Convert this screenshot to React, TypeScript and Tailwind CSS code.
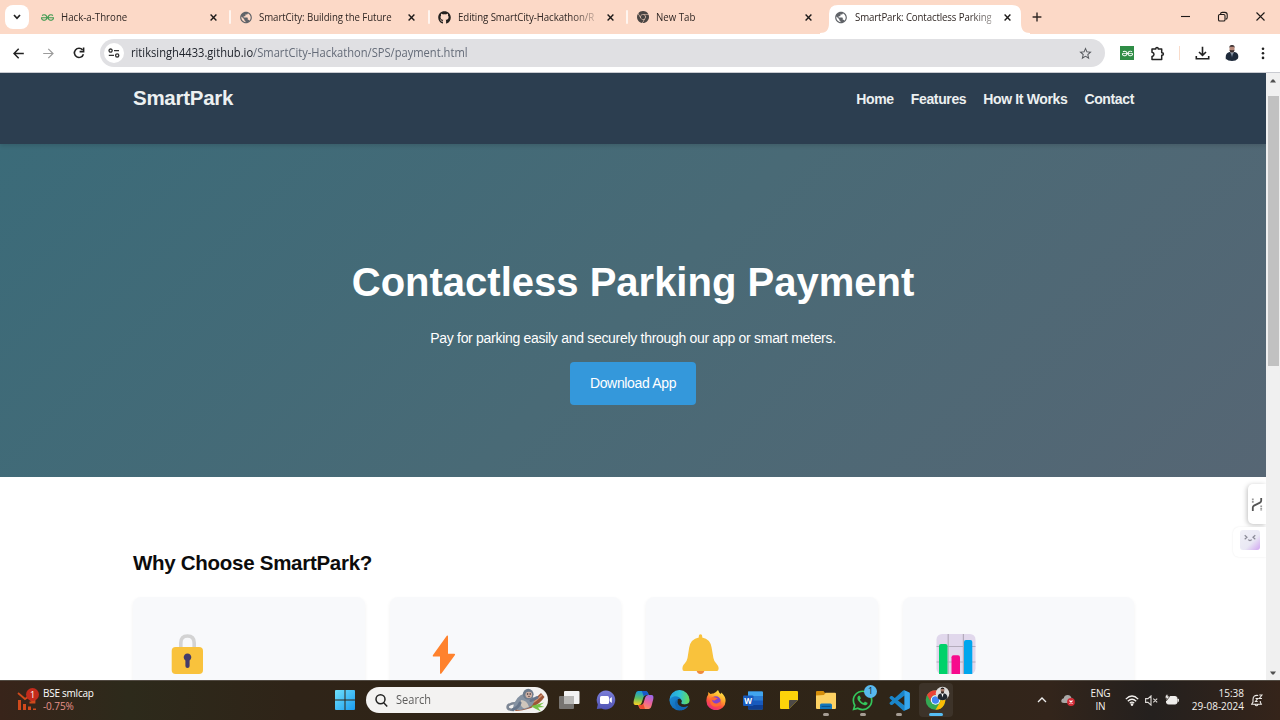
import type { ReactNode } from "react";
import { SiGeeksforgeeks, SiGooglechrome } from "react-icons/si";
import { FaGithub, FaWhatsapp } from "react-icons/fa";
import { MdPublic, MdStarBorder } from "react-icons/md";

const ui = "font-['Open_Sans','Noto_Sans',sans-serif]";

type TabProps = { icon: ReactNode; title: string; active?: boolean; sep?: boolean; titleClass?: string };

function Tab({ icon, title, active, sep, titleClass = "" }: TabProps) {
  return (
    <div className="relative h-[33px] w-[198.5px] shrink-0 pt-[5px]">
      {active && (
        <svg className="absolute -left-[6px] top-[5px]" width="210" height="29" viewBox="0 0 210 29">
          <path d="M0 29 V28 C6 28 9 25 9 18 V9 Q9 0 18 0 H192 Q201 0 201 9 V18 C201 25 204 28 210 28 V29Z" fill="#fff" />
        </svg>
      )}
      <div className="relative flex h-6 items-center pl-[8.5px]">
        <span className="flex w-[14px] justify-center">{icon}</span>
        <span className="ml-[6.5px] w-[136px] whitespace-nowrap text-[11px] text-[#302724]">
          <span className={`inline-block origin-left scale-x-[0.88] ${titleClass}`}>{title}</span>
        </span>
        <svg className="ml-[13px]" width="7" height="7" viewBox="0 0 7 7">
          <path d="M0.6 0.6 L6.4 6.4 M6.4 0.6 L0.6 6.4" stroke="#1d1a19" strokeWidth="1.4" />
        </svg>
      </div>
      {sep && <span className="absolute -right-px top-[10px] h-[14px] w-[2px] rounded bg-[#fff5ef]" />}
    </div>
  );
}

function TabStrip() {
  const globe = <MdPublic size={15} color="#606368" />;
  return (
    <div className={`flex h-[34px] bg-[#fcd9c7] ${ui}`}>
      <div className="ml-[5px] mt-[5px] flex h-6 w-6 items-center justify-center rounded-lg bg-white">
        <svg width="8" height="6" viewBox="0 0 8 6">
          <path d="M1 1 L4 4.3 L7 1" fill="none" stroke="#222" strokeWidth="1.7" />
        </svg>
      </div>
      <div className="ml-[2.5px] flex">
        <Tab icon={<SiGeeksforgeeks size={13} color="#3f9a50" />} title="Hack-a-Throne" sep />
        <Tab icon={globe} title="SmartCity: Building the Future" titleClass="tracking-[-0.1px]" sep />
        <Tab
          icon={<FaGithub size={13} color="#24211f" />}
          title="Editing SmartCity-Hackathon/R"
          titleClass="tracking-[-0.1px] [mask-image:linear-gradient(90deg,#000_83%,rgba(0,0,0,0.25)_100%)]"
          sep
        />
        <Tab icon={<SiGooglechrome size={12} color="#4a4543" />} title="New Tab" />
        <Tab
          icon={globe}
          title="SmartPark: Contactless Parking"
          titleClass="tracking-[-0.15px] [mask-image:linear-gradient(90deg,#000_83%,rgba(0,0,0,0.5)_100%)]"
          active
        />
      </div>
      <svg className="ml-[8px] mt-[12px]" width="10" height="10" viewBox="0 0 10 10">
        <path d="M5 0.6 V9.4 M0.6 5 H9.4" stroke="#302724" strokeWidth="1.4" />
      </svg>
      <div className="ml-auto mt-[11px] flex h-3 items-center pr-[14px]">
        <svg width="86" height="12" viewBox="0 0 86 12" fill="none" stroke="#1e1a18" strokeWidth="1.1">
          <path d="M1 5.5 H10" />
          <rect x="38.5" y="3.5" width="6.5" height="6.5" rx="1.3" />
          <path d="M40.5 3 Q40.6 1.4 42.4 1.4 H44.8 Q47.2 1.4 47.2 3.8 V6.4 Q47.2 8 45.6 8.2" />
          <path d="M76.5 1.5 L84.5 9.5 M84.5 1.5 L76.5 9.5" />
        </svg>
      </div>
    </div>
  );
}

function Toolbar() {
  return (
    <div className={`flex h-[39px] items-center border-b border-[#c9cbd1] bg-white pl-[13px] ${ui}`}>
      <svg width="11" height="11" viewBox="0 0 11 11" fill="none" stroke="#222" strokeWidth="1.5">
        <path d="M10.8 5.5 H1.5 M5.7 0.8 L1 5.5 L5.7 10.2" />
      </svg>
      <svg className="ml-[19px]" width="11" height="11" viewBox="0 0 11 11" fill="none" stroke="#9b9b9b" strokeWidth="1.2">
        <path d="M0.2 5.5 H9.5 M5.3 0.8 L10 5.5 L5.3 10.2" />
      </svg>
      <svg className="ml-[19px]" width="12" height="12" viewBox="0 0 12 12" fill="none" stroke="#222" strokeWidth="1.6">
        <path d="M9.6 3 A4.6 4.6 0 1 0 10.4 7.2" />
        <path d="M10.6 0.6 V4.6 H6.6" />
      </svg>
      <div className="ml-[15px] flex h-7 w-[1005px] items-center rounded-full bg-[#e0e0e3] pl-[4px] pr-[12px]">
        <span className="flex h-5 w-5 items-center justify-center rounded-full bg-white">
          <svg width="12" height="10" viewBox="0 0 12 10" fill="none" stroke="#333" strokeWidth="1.3">
            <circle cx="2.6" cy="2.6" r="1.6" />
            <path d="M6 2.6 H11 M0.8 7.4 H6" />
            <circle cx="9.2" cy="7.4" r="1.6" />
          </svg>
        </span>
        <span className="ml-[7px] inline-block origin-left scale-x-[0.9] whitespace-nowrap text-[12.4px] text-[#646b78]">
          <span className="text-[#20242c]">ritiksingh4433.github.io</span>/SmartCity-Hackathon/SPS/payment.html
        </span>
        <MdStarBorder className="ml-auto" size={15} color="#55585d" />
      </div>
      <div className="ml-[15px] flex h-[14px] w-[14px] items-center justify-center bg-[#2f8d46]">
        <SiGeeksforgeeks size={11} color="#fff" />
      </div>
      <svg className="ml-[16px]" width="15" height="15" viewBox="0 0 15 15">
        <path
          d="M2 3 H5.8 V2.6 A1.2 1.2 0 0 1 8.2 2.6 V3 H11.7 V6.8 H12.2 A1.2 1.2 0 0 1 12.2 9.2 H11.7 V13.6 H2 V10.5 Q4 10 4 8.3 Q4 6.6 2 6.2Z"
          fill="none"
          stroke="#222"
          strokeWidth="1.5"
          strokeLinejoin="round"
        />
      </svg>
      <span className="ml-[14px] h-[14px] w-px bg-[#f9dccb]" />
      <svg className="ml-[15px]" width="15" height="15" viewBox="0 0 15 15" fill="none" stroke="#222" strokeWidth="1.6">
        <path d="M7.5 0.8 V9 M4 6 L7.5 9.4 L11 6 M1.3 10 V12.8 H13.7 V10" />
      </svg>
      <svg className="ml-[15px]" width="14" height="18" viewBox="0 0 14 18">
        <path d="M1 16 Q-0.4 9.2 4.5 8 H9.5 Q14.4 9.2 13 14.5 Q11 17 7 17 Q3 17 1 15Z" fill="#1e2a3b" />
        <path d="M5.3 8 H8.7 L7 13Z" fill="#c8d3df" />
        <path d="M6.6 9 H7.4 L7.6 13 L7 14 L6.4 13Z" fill="#2c3a50" />
        <ellipse cx="7" cy="4.9" rx="2.5" ry="3.3" fill="#b8897a" />
        <path d="M4.4 4.2 Q4 1 7 1 Q10 1 9.6 4.2 L9 2.8 H5Z M4.6 5.8 L5.5 6.2 H8.5 L9.4 5.8 Q9.3 8.6 7 8.6 Q4.7 8.6 4.6 5.8Z" fill="#342b2d" />
      </svg>
      <svg className="ml-[21.5px]" width="4" height="13" viewBox="0 0 4 13" fill="#222">
        <circle cx="2" cy="1.7" r="1.3" />
        <circle cx="2" cy="6.3" r="1.3" />
        <circle cx="2" cy="10.9" r="1.3" />
      </svg>
    </div>
  );
}

const LockIcon = () => (
  <svg width="40" height="40" viewBox="0 0 40 40">
    <path d="M13.8 16 V9 Q13.8 2 20.5 2 Q27.2 2 27.2 9 V16" fill="none" stroke="#d3d3d3" strokeWidth="3.6" />
    <rect x="4.7" y="13" width="31.3" height="27" rx="4" fill="#f9c23c" />
    <path d="M18.4 26.5 A3.8 3.8 0 1 1 22.6 26.5 V32 A2.1 2.1 0 0 1 18.4 32Z" fill="#433b6b" />
  </svg>
);

const BoltIcon = () => (
  <svg width="40" height="40" viewBox="0 0 40 40">
    <path d="M23.8 1.7 Q25 1 25 2.4 V19.8 H31.2 Q32.6 19.9 31.8 21.2 L18.4 39.4 Q17 40.5 17 39 V22.6 H10.8 Q9.2 22.5 10 21.1Z" fill="#ff822d" />
  </svg>
);

const BellIcon = () => (
  <svg width="40" height="40" viewBox="0 0 40 40">
    <path d="M16.5 36 H24.5 Q24 40 20.5 40 Q17 40 16.5 36Z" fill="#f18b3b" />
    <path d="M18.8 3.4 V2 A1.7 1.7 0 0 1 22.2 2 V3.4 Q30.4 5 31.6 13.5 L33.4 24 Q33.8 27 36.5 29.7 Q39.6 33 38.2 36.3 Q38 37 36.7 37 H4.3 Q3 37 2.7 36.3 Q1.6 32.5 4.7 29.5 Q7 27 7.5 24 L9.2 13.5 Q10.5 5 18.8 3.4Z" fill="#f9c23c" />
  </svg>
);

const ChartIcon = () => (
  <svg width="40" height="40" viewBox="0 0 40 40">
    <rect x="0.5" width="39" height="40" rx="5.5" fill="#e1d8ec" />
    <path d="M12.2 0 V40 M27.4 0 V40 M0.5 12.5 H39.5 M0.5 28 H39.5" stroke="#b4acbc" strokeWidth="1.2" />
    <path d="M3 40 V12 Q3 10 5 10 H9.5 Q11.5 10 11.5 12 V40Z" fill="#00d26a" />
    <path d="M15.5 40 V23.3 Q15.5 21.3 17.5 21.3 H22 Q24 21.3 24 23.3 V40Z" fill="#f70a8d" />
    <path d="M28 40 V8 Q28 6 30 6 H34.3 Q36.3 6 36.3 8 V40Z" fill="#00a6ed" />
  </svg>
);

function Page() {
  return (
    <div className="min-w-0 flex-1 overflow-hidden bg-white font-['Liberation_Sans',Arial,sans-serif]">
      <header className="relative z-10 h-[71px] bg-[#2c3e50] shadow-[0_2px_4px_rgba(0,0,0,0.12)]">
        <div className="ml-[133px] flex w-[1001px] items-start justify-between text-[#ecf0f1]">
          <div className="mt-[10px] text-[20.5px] leading-[30px] font-bold tracking-[-0.27px]">SmartPark</div>
          <nav className="mt-[16px] flex gap-[17px] text-[14px] leading-[20px] font-bold tracking-[-0.36px]">
            <span>Home</span>
            <span>Features</span>
            <span>How It Works</span>
            <span>Contact</span>
          </nav>
        </div>
      </header>
      <section className="flex h-[333px] flex-col items-center bg-[linear-gradient(135deg,#3b6b79_0%,#496a76_50%,#566674_100%)] text-white">
        <h1 className="mt-[108px] text-[40px] leading-[60px] font-bold">Contactless Parking Payment</h1>
        <p className="mt-[16px] text-[14px] leading-[20px] tracking-[-0.295px]">
          Pay for parking easily and securely through our app or smart meters.
        </p>
        <div className="mt-[14px] flex h-[43px] w-[126px] items-center justify-center rounded-[4px] bg-[#3498db] text-[14px] tracking-[-0.34px]">
          Download App
        </div>
      </section>
      <main className="ml-[133px] w-[1001px] pt-[71px]">
        <h2 className="text-[20.5px] leading-[30px] font-bold tracking-[-0.28px] text-[#0c0c0c]">Why Choose SmartPark?</h2>
        <div className="mt-[19px] grid grid-cols-4 gap-[25px]">
          {[<LockIcon />, <BoltIcon />, <BellIcon />, <ChartIcon />].map((icon, i) => (
            <div key={i} className="h-[200px] rounded-[8px] bg-[#f8f9fb] pl-[33.8px] pt-[37px] shadow-[0_2px_4px_rgba(0,0,0,0.06)]">
              {icon}
            </div>
          ))}
        </div>
      </main>
    </div>
  );
}

function ScrollBar() {
  return (
    <div className="flex w-[14px] flex-col items-center bg-[#f0f0f0]">
      <svg className="mt-[6px]" width="6" height="4" viewBox="0 0 6 4">
        <path d="M0 3.5 L2.2 0.6 H3.8 L6 3.5Z" fill="#505050" />
      </svg>
      <div className="mt-[13px] h-[270px] w-[11px] bg-[#c1c1c1]" />
      <svg className="mb-[5px] mt-auto" width="6" height="4" viewBox="0 0 6 4">
        <path d="M0 0.5 L2.2 3.4 H3.8 L6 0.5Z" fill="#505050" />
      </svg>
    </div>
  );
}

function SideWidgets() {
  return (
    <div className="absolute right-[14px] top-[411px] z-20 flex flex-col items-end">
      <div className="flex h-10 w-[18px] items-center justify-center rounded-l-[5px] bg-white shadow-[-1px_1px_5px_rgba(0,0,0,0.25)] [clip-path:inset(-8px_0_-8px_-8px)]">
        <svg width="12" height="15" viewBox="0 0 12 15" fill="none">
          <path d="M1.8 14 V10.5 Q1.8 9.3 3 8.6 L9 5.6 Q10.2 5 10.2 3.8 V1" stroke="#555" strokeWidth="1.8" />
          <path d="M1.8 1.5 V6.5 M10.2 8.5 V14" stroke="#999" strokeWidth="1.8" strokeDasharray="1.8 0.7" />
        </svg>
      </div>
      <div className="mt-[3px] flex h-[30px] w-[33px] items-start rounded-l-[6px] bg-white pl-[7px] pt-[3px] shadow-[0_0_2px_rgba(0,0,0,0.09)] [clip-path:inset(-4px_0_-4px_-4px)]">
        <div className="flex h-5 w-5 justify-center rounded-[3px] bg-[linear-gradient(135deg,#f0f0f7_0%,#e9e8f4_60%,#d0a5f0_100%)] pt-[4px]">
          <svg width="12" height="8" viewBox="0 0 12 8" fill="none" stroke="#8b8b97" strokeWidth="1.2">
            <path d="M0.7 1.2 L3 3.2 L0.7 5.2 M11.3 1.2 L9 3.2 L11.3 5.2 M4.2 5.6 Q6 7.4 7.8 5.6" />
          </svg>
        </div>
      </div>
    </div>
  );
}

const WindowsLogo = () => (
  <svg width="20" height="20" viewBox="0 0 20 20">
    <defs>
      <linearGradient id="win" x1="0" y1="0" x2="20" y2="20" gradientUnits="userSpaceOnUse">
        <stop offset="0" stopColor="#6fe0fb" />
        <stop offset="1" stopColor="#1b9cf0" />
      </linearGradient>
    </defs>
    <path d="M0 1 Q0 0 1 0 H9.5 V9.5 H0Z M10.5 0 H19 Q20 0 20 1 V9.5 H10.5Z M0 10.5 H9.5 V20 H1 Q0 20 0 19Z M10.5 10.5 H20 V19 Q20 20 19 20 H10.5Z" fill="url(#win)" />
  </svg>
);

const Monkey = () => (
  <svg width="40" height="24" viewBox="0 0 40 24">
    <path d="M10 21 Q23 18 35 5 L38.5 9 Q34 16 25 20 Q16 23 9 23Z" fill="#9c5638" />
    <path d="M11 21.5 Q24 19 36 7" stroke="#cf9274" strokeWidth="1.6" fill="none" />
    <path d="M25 18 L31 16.5 L38 14.5 L34 17.5 L38.5 19 L32 19.5 L35 23.5 L28 20Z" fill="#76c247" />
    <path d="M8 22 Q0 22 2 17.5 Q5 15 11 15" stroke="#7d8795" strokeWidth="2.6" fill="none" />
    <path d="M7 20 Q9 8 19 5.5 Q29 5 28 14 Q26 20 17 21.5 Q10 23 7 20Z" fill="#8592a2" />
    <path d="M15 12 Q21 12 23 19 L18 20.5 Q13 18 15 12Z" fill="#cfc6bc" />
    <path d="M14 15 Q12 20 7 21.5 M25 12.5 L31 9.5" stroke="#66758a" strokeWidth="3" fill="none" strokeLinecap="round" />
    <circle cx="22.2" cy="6.2" r="5.4" fill="#6e7c8d" />
    <ellipse cx="22.8" cy="6.9" rx="3.4" ry="3.1" fill="#cdb0a4" />
    <circle cx="21.6" cy="6" r="0.8" fill="#342f34" />
    <circle cx="24.2" cy="6" r="0.8" fill="#342f34" />
    <path d="M22 8.4 H24" stroke="#634b46" strokeWidth="0.8" />
  </svg>
);

const TaskView = () => (
  <svg width="21" height="20" viewBox="0 0 21 20">
    <rect x="5" y="1" width="15.5" height="13" rx="1" fill="#f3f3f3" />
    <rect x="0" y="6" width="15" height="13" rx="1" fill="#777471" />
    <path d="M5 6 H15 V14 H5Z" fill="#b9b8b6" />
  </svg>
);

const Chat = () => (
  <svg width="20" height="20" viewBox="0 0 20 20">
    <defs>
      <linearGradient id="chat" x1="0" y1="0" x2="0" y2="1">
        <stop offset="0" stopColor="#7b7fd9" />
        <stop offset="1" stopColor="#4f52b2" />
      </linearGradient>
    </defs>
    <path d="M10 0.5 A9.5 9.5 0 1 1 5.5 18.5 L0.8 19 L1.8 14.5 A9.5 9.5 0 0 1 10 0.5Z" fill="url(#chat)" />
    <rect x="4" y="6" width="9" height="8" rx="1.5" fill="#fff" />
    <path d="M13.6 8.8 L15.8 7 V13 L13.6 11.2Z" fill="#fff" />
  </svg>
);

const Copilot = () => (
  <svg width="21" height="20" viewBox="0 0 21 20">
    <defs>
      <linearGradient id="cpa" x1="0.3" y1="0" x2="0.2" y2="1">
        <stop offset="0" stopColor="#1798df" />
        <stop offset="0.5" stopColor="#5bbf64" />
        <stop offset="1" stopColor="#ffd021" />
      </linearGradient>
      <linearGradient id="cpb" x1="0.8" y1="0" x2="0.3" y2="1">
        <stop offset="0" stopColor="#9a67eb" />
        <stop offset="0.5" stopColor="#ee6497" />
        <stop offset="1" stopColor="#ff9750" />
      </linearGradient>
    </defs>
    <path d="M5 1 H12.5 Q14.5 1 15.2 3.5 L15.8 5 H13 Q11 5 10.3 7.5 L8.8 12.4 Q8 15 5.8 15 H2.5 Q0 15 0.7 11 L2.5 4 Q3.3 1 5 1Z" fill="url(#cpa)" />
    <path d="M12.5 1 Q14.5 1 15.2 3.5 L15.8 5 H13 Q11.5 5 10.8 6.5 L8.8 1Z" fill="#1858c8" />
    <path d="M16 19 H8.5 Q6.5 19 5.8 16.5 L5.2 15 H8 Q10 15 10.7 12.5 L12.2 7.6 Q13 5 15.2 5 H18.5 Q21 5 20.3 9 L18.5 16 Q17.7 19 16 19Z" fill="url(#cpb)" />
    <path d="M5.2 15 H8 Q9.5 15 10.2 13.5 L12 19 H8.5 Q6.5 19 5.8 16.5Z" fill="#ed4a32" />
  </svg>
);

const Edge = () => (
  <svg width="21" height="21" viewBox="0 0 21 21">
    <defs>
      <linearGradient id="ea" x1="0" y1="0.4" x2="1" y2="0.5">
        <stop offset="0" stopColor="#259fe0" />
        <stop offset="0.5" stopColor="#2ec2d6" />
        <stop offset="1" stopColor="#66dc55" />
      </linearGradient>
      <linearGradient id="eb" x1="0" y1="0" x2="1" y2="1">
        <stop offset="0" stopColor="#1c93dd" />
        <stop offset="1" stopColor="#0e55a5" />
      </linearGradient>
    </defs>
    <circle cx="10.5" cy="10.5" r="10" fill="url(#eb)" />
    <path d="M0.5 10 A10 10 0 0 1 20.5 10 Q20.5 14.3 15.7 14.4 Q12 14.4 12.2 12.8 Q13.3 11.8 12.4 9.9 Q10.5 6 5.8 6.3 Q2 6.8 0.5 10Z" fill="url(#ea)" />
    <path d="M8.6 9.6 Q6.6 16.7 14.8 17.7 Q17.5 17.6 19.2 15.7 L20.3 15.2 L21 14 L20 13 Q18.5 14.4 15.7 14.4 Q12 14.4 12.2 12.8 Q13.4 11.6 12.4 9.9 Q10.4 8 8.6 9.6Z" fill="#2b2519" />
    <path d="M6 12.5 Q6 19 12.5 20.3 Q17.4 19.4 19.2 15.7 Q14.5 18.2 10.9 16.1 Q7.6 14 8.6 9.6 Q6.4 10 6 12.5Z" fill="#1267b4" />
  </svg>
);

const Firefox = () => (
  <svg width="20" height="20" viewBox="0 0 20 20">
    <defs>
      <linearGradient id="ff" x1="0.8" y1="0" x2="0.3" y2="1">
        <stop offset="0" stopColor="#fff150" />
        <stop offset="0.4" stopColor="#ffa929" />
        <stop offset="0.7" stopColor="#ff4e42" />
        <stop offset="1" stopColor="#e52a82" />
      </linearGradient>
    </defs>
    <path d="M12 0 Q13 3 15 4 L15.3 2.5 Q19.7 6.5 19.6 11 A9.6 9.2 0 0 1 0.4 11 Q0.2 7 2.2 4.5 L2.2 2 L4.5 4 Q5.8 3.4 7.4 3.6 Q9.7 2.8 12 0Z" fill="url(#ff)" />
    <circle cx="9.8" cy="11.2" r="5" fill="#8342ca" />
    <path d="M4.6 8.2 Q6.7 6.2 9.6 7.6 L12 8.8 Q10 9.1 9 10.2 Q7.4 10.8 5.9 9.7 Q7 14 11 13.4 Q14 13 15 10 Q15.4 16.6 9.7 16.7 Q4.2 16.3 4 11Z" fill="#ff6b30" />
  </svg>
);

const Word = () => (
  <svg width="20" height="19" viewBox="0 0 20 19">
    <rect x="5" y="0.5" width="15" height="18" rx="1.2" fill="#2b7cd3" />
    <path d="M5 0.5 H19 Q20 0.5 20 1.5 V5 H5Z" fill="#41a5ee" />
    <path d="M5 9.5 H20 V14 H5Z" fill="#185abd" />
    <path d="M5 14 H20 V17.5 Q20 18.5 19 18.5 H6 Q5 18.5 5 17.5Z" fill="#103f91" />
    <rect x="0" y="4.5" width="10.5" height="10.5" rx="1" fill="#185abd" />
    <text x="5.2" y="12.6" textAnchor="middle" fontSize="8" fontWeight="700" fill="#fff" fontFamily="Open Sans">W</text>
  </svg>
);

const Sticky = () => (
  <svg width="18" height="18" viewBox="0 0 18 18">
    <path d="M1 0 H17 Q18 0 18 1 V9 L9 18 H1 Q0 18 0 17 V1 Q0 0 1 0Z" fill="#fcd30a" />
    <path d="M9 18 V9.7 Q9 9 9.7 9 H18Z" fill="#4e4a47" />
  </svg>
);

const Explorer = () => (
  <svg width="20" height="18" viewBox="0 0 20 18">
    <path d="M0 1 Q0 0 1 0 H7.5 L9 2 V5 H0Z" fill="#d48d0a" />
    <path d="M0 4.5 L8 4 L9.5 1.7 H19 Q20 1.7 20 2.7 V17 Q20 18 19 18 H1 Q0 18 0 17Z" fill="#fcd163" />
    <path d="M4 18 V14 Q4 12.5 5.5 12.5 H14.5 Q16 12.5 16 14 V18Z" fill="#1377bd" />
    <path d="M5.5 15.4 H14.5" stroke="#0a528c" strokeWidth="1.1" />
  </svg>
);

const VSCode = () => (
  <svg width="21" height="21" viewBox="0 0 100 100">
    <path d="M72 1 L96 12 Q99 14 99 18 V82 Q99 86 96 88 L72 99 Q69 100 66 96 L4 40 Q0 36 4 33 L9 29 Q12 27 15 29 L74 74 V26 L15 71 Q12 73 9 71 L4 67 Q0 63 4 60 L66 4 Q69 0 72 1Z" fill="#1a85c9" />
    <path d="M72 1 L96 12 Q99 14 99 18 V82 Q99 86 96 88 L72 99 Q74 97 74 94 V6 Q74 3 72 1Z" fill="#36a6ed" />
  </svg>
);

const Chrome = () => (
  <svg width="32" height="25" viewBox="0 0 32 25">
    <g transform="translate(15.5 14)">
      <circle r="9.8" fill="#34a853" />
      <path d="M-8.5 -4.9 A9.8 9.8 0 0 1 8.5 -4.9 H0 A4.9 4.9 0 0 0 -4.3 2.4Z" fill="#ea4335" />
      <path d="M8.5 -4.9 A9.8 9.8 0 0 1 0 9.8 L4.3 2.4 A4.9 4.9 0 0 0 0 -4.9Z" fill="#fbbc05" />
      <circle r="4.7" fill="#fff" />
      <circle r="3.7" fill="#4285f4" />
    </g>
    <circle cx="22.5" cy="7.5" r="6.8" fill="#dddcdb" />
    <path d="M17.6 12.2 Q17.5 8.3 20.5 7.5 H24.5 Q27.5 8.3 27.4 12.2 Q25.4 14.3 22.5 14.3 Q19.6 14.3 17.6 12.2Z" fill="#202830" />
    <path d="M21.4 7.5 H23.6 L22.5 11.5Z" fill="#fff" />
    <ellipse cx="22.5" cy="4.6" rx="1.8" ry="2.7" fill="#a27565" />
    <path d="M20.6 4.2 Q20.4 1.4 22.5 1.4 Q24.6 1.4 24.4 4.2 L24 3 H21Z M20.9 5.4 H24.1 Q24 7.5 22.5 7.5 Q21 7.5 20.9 5.4Z" fill="#28201f" />
  </svg>
);

function AppButton({ children, running, active }: { children: ReactNode; running?: boolean; active?: boolean }) {
  return (
    <div className="relative flex h-10 w-[36.6px] shrink-0 items-center justify-center">
      {active && <span className="absolute inset-x-[1.3px] bottom-[3px] top-[3px] rounded-[4px] bg-[#3d3329]" />}
      <span className="relative">{children}</span>
      {running && <span className="absolute bottom-[4px] left-1/2 h-[3px] w-[6px] -translate-x-1/2 rounded-full bg-[#a69d94]" />}
      {active && <span className="absolute bottom-[4px] left-1/2 h-[3px] w-[14px] -translate-x-1/2 rounded-full bg-[#56bdf3]" />}
    </div>
  );
}

function Taskbar() {
  return (
    <div
      className={`flex h-10 items-center border-t border-[#514a42] bg-[linear-gradient(90deg,#38241a_0%,#2d2a1b_10%,#2f2418_23%,#302416_40%,#2f2518_70%,#33251b_82%,#24201e_90%,#35241a_100%)] pb-px ${ui}`}
    >
      <div className="flex w-[335px] items-center pl-[17px]">
        <div className="relative h-[26px] w-[22px]">
          <svg width="22" height="26" viewBox="0 0 22 26">
            <path d="M1 6 L8 12 L11 10 L17 15.5 M12.5 15.5 H17.5 V11" fill="none" stroke="#cf4a1c" strokeWidth="1.8" />
            <path d="M1 13 H4 V23 H1Z M6 17 H9 V23 H6Z M11 19.5 H14 V23 H11Z M16 21.5 H19 V23 H16Z" fill="#cf4a1c" />
          </svg>
          <span className="absolute left-[9px] top-px flex h-[13px] w-[13px] items-center justify-center rounded-full bg-[#c42b1c] text-[9px] text-white">1</span>
        </div>
        <div className="ml-[4px] text-[10px] leading-[13px] tracking-[-0.25px] whitespace-nowrap text-white">
          <div>BSE smlcap</div>
          <div className="tracking-[-0.1px] text-[#e6928b]">-0.75%</div>
        </div>
      </div>
      <WindowsLogo />
      <div className="ml-[11px] flex h-[26px] w-[182px] items-center rounded-full bg-[#f3f2f1] pl-[9px] pr-[2px]">
        <svg width="13" height="13" viewBox="0 0 13 13" fill="none" stroke="#222" strokeWidth="1.5">
          <circle cx="5.5" cy="5.3" r="4.5" />
          <path d="M8.7 8.7 L12.2 12.4" />
        </svg>
        <span className="ml-[8px] inline-block origin-left scale-x-[0.92] text-[12px] text-[#5d5c5b]">Search</span>
        <span className="ml-auto">
          <Monkey />
        </span>
      </div>
      <div className="ml-[3.6px] flex">
        <AppButton><TaskView /></AppButton>
        <AppButton><Chat /></AppButton>
        <AppButton><Copilot /></AppButton>
        <AppButton><Edge /></AppButton>
        <AppButton><Firefox /></AppButton>
        <AppButton><Word /></AppButton>
        <AppButton><Sticky /></AppButton>
        <AppButton running><Explorer /></AppButton>
        <AppButton running>
          <FaWhatsapp size={23} color="#34c65b" />
          <span className="absolute -right-[3px] -top-[4px] flex h-[13px] w-[13px] items-center justify-center rounded-full bg-[#58b8ed] text-[9px] text-[#16242d]">1</span>
        </AppButton>
        <AppButton running><VSCode /></AppButton>
        <AppButton active>
          <span className="block -translate-y-[2px]"><Chrome /></span>
        </AppButton>
      </div>
      <div className="ml-auto flex items-center pr-[10px] text-[10px] leading-[13px] whitespace-nowrap text-[#f5f2ef]">
        <div className="flex w-[24px] justify-center">
          <svg width="10" height="6" viewBox="0 0 10 6"><path d="M1 5 L5 1 L9 5" fill="none" stroke="#eee" strokeWidth="1.3" /></svg>
        </div>
        <div className="flex w-[28px] justify-center">
          <svg width="14" height="12" viewBox="0 0 14 12">
            <path d="M3 9 Q0 9 0.3 6.5 Q0.6 4.5 2.7 4.3 Q3.5 1 6.7 1 Q9.5 1 10.5 4 Q13 4.5 12.7 7 Q12 9 10 9Z" fill="#aaa8a7" />
            <circle cx="10" cy="8" r="3.9" fill="#d32b36" />
            <path d="M8.5 6.5 L11.5 9.5 M11.5 6.5 L8.5 9.5" stroke="#fff" strokeWidth="1.1" />
          </svg>
        </div>
        <div className="w-[37px] text-center tracking-[-0.2px]">ENG<br />IN</div>
        <div className="flex w-[25px] justify-center">
          <svg width="14" height="11" viewBox="0 0 14 11" fill="none" stroke="#f5f2ef" strokeWidth="1.3">
            <path d="M0.8 4.1 Q7 -2 13.2 4.1 M2.8 6.3 Q7 2.2 11.2 6.3 M4.8 8.2 Q7 6 9.2 8.2" />
            <circle cx="7" cy="9.6" r="0.7" fill="#f5f2ef" />
          </svg>
        </div>
        <div className="flex w-[15px] justify-center">
          <svg width="13" height="11" viewBox="0 0 13 11" fill="none" stroke="#dedad7" strokeWidth="1.1">
            <path d="M0.6 3.6 H3 L6 0.9 V10.1 L3 7.4 H0.6Z M8.3 3.6 L12.2 7.4 M12.2 3.6 L8.3 7.4" />
          </svg>
        </div>
        <div className="flex w-[25px] justify-center">
          <svg width="14" height="12" viewBox="0 0 14 12">
            <rect x="1.5" y="2.5" width="10.5" height="7.5" rx="1.8" fill="#efedeb" stroke="#efedeb" />
            <rect x="12.6" y="4.8" width="1.3" height="3" rx="0.5" fill="#efedeb" />
            <path d="M0.2 2.8 L1.4 0.4 H3.2 L2.8 2.2 H4.8 L1.4 6.8 L1.9 4.2 H0.2Z" fill="#efedeb" stroke="#2a221e" strokeWidth="0.7" />
          </svg>
        </div>
        <div className="w-[60px] text-right">15:38<br />29-08-2024</div>
        <div className="flex w-[26px] justify-center">
          <svg width="12" height="13" viewBox="0 0 12 13" fill="none" stroke="#ece9e6" strokeWidth="1.1">
            <path d="M7.2 1.5 Q2 0.8 2 5.5 V8 L0.7 10.2 H10.3 L9.3 8.2 V7 M4 10.5 Q5.5 13 7 10.5" />
            <path d="M8.3 1 H11 L8.3 4.5 H11 M4.5 4.5 H6.7 L4.5 7.5 H6.7" />
          </svg>
        </div>
      </div>
    </div>
  );
}

export default function App() {
  return (
    <div className="flex h-[720px] w-[1280px] flex-col overflow-hidden">
      <TabStrip />
      <Toolbar />
      <div className="relative flex min-h-0 flex-1">
        <Page />
        <ScrollBar />
        <SideWidgets />
      </div>
      <Taskbar />
    </div>
  );
}
